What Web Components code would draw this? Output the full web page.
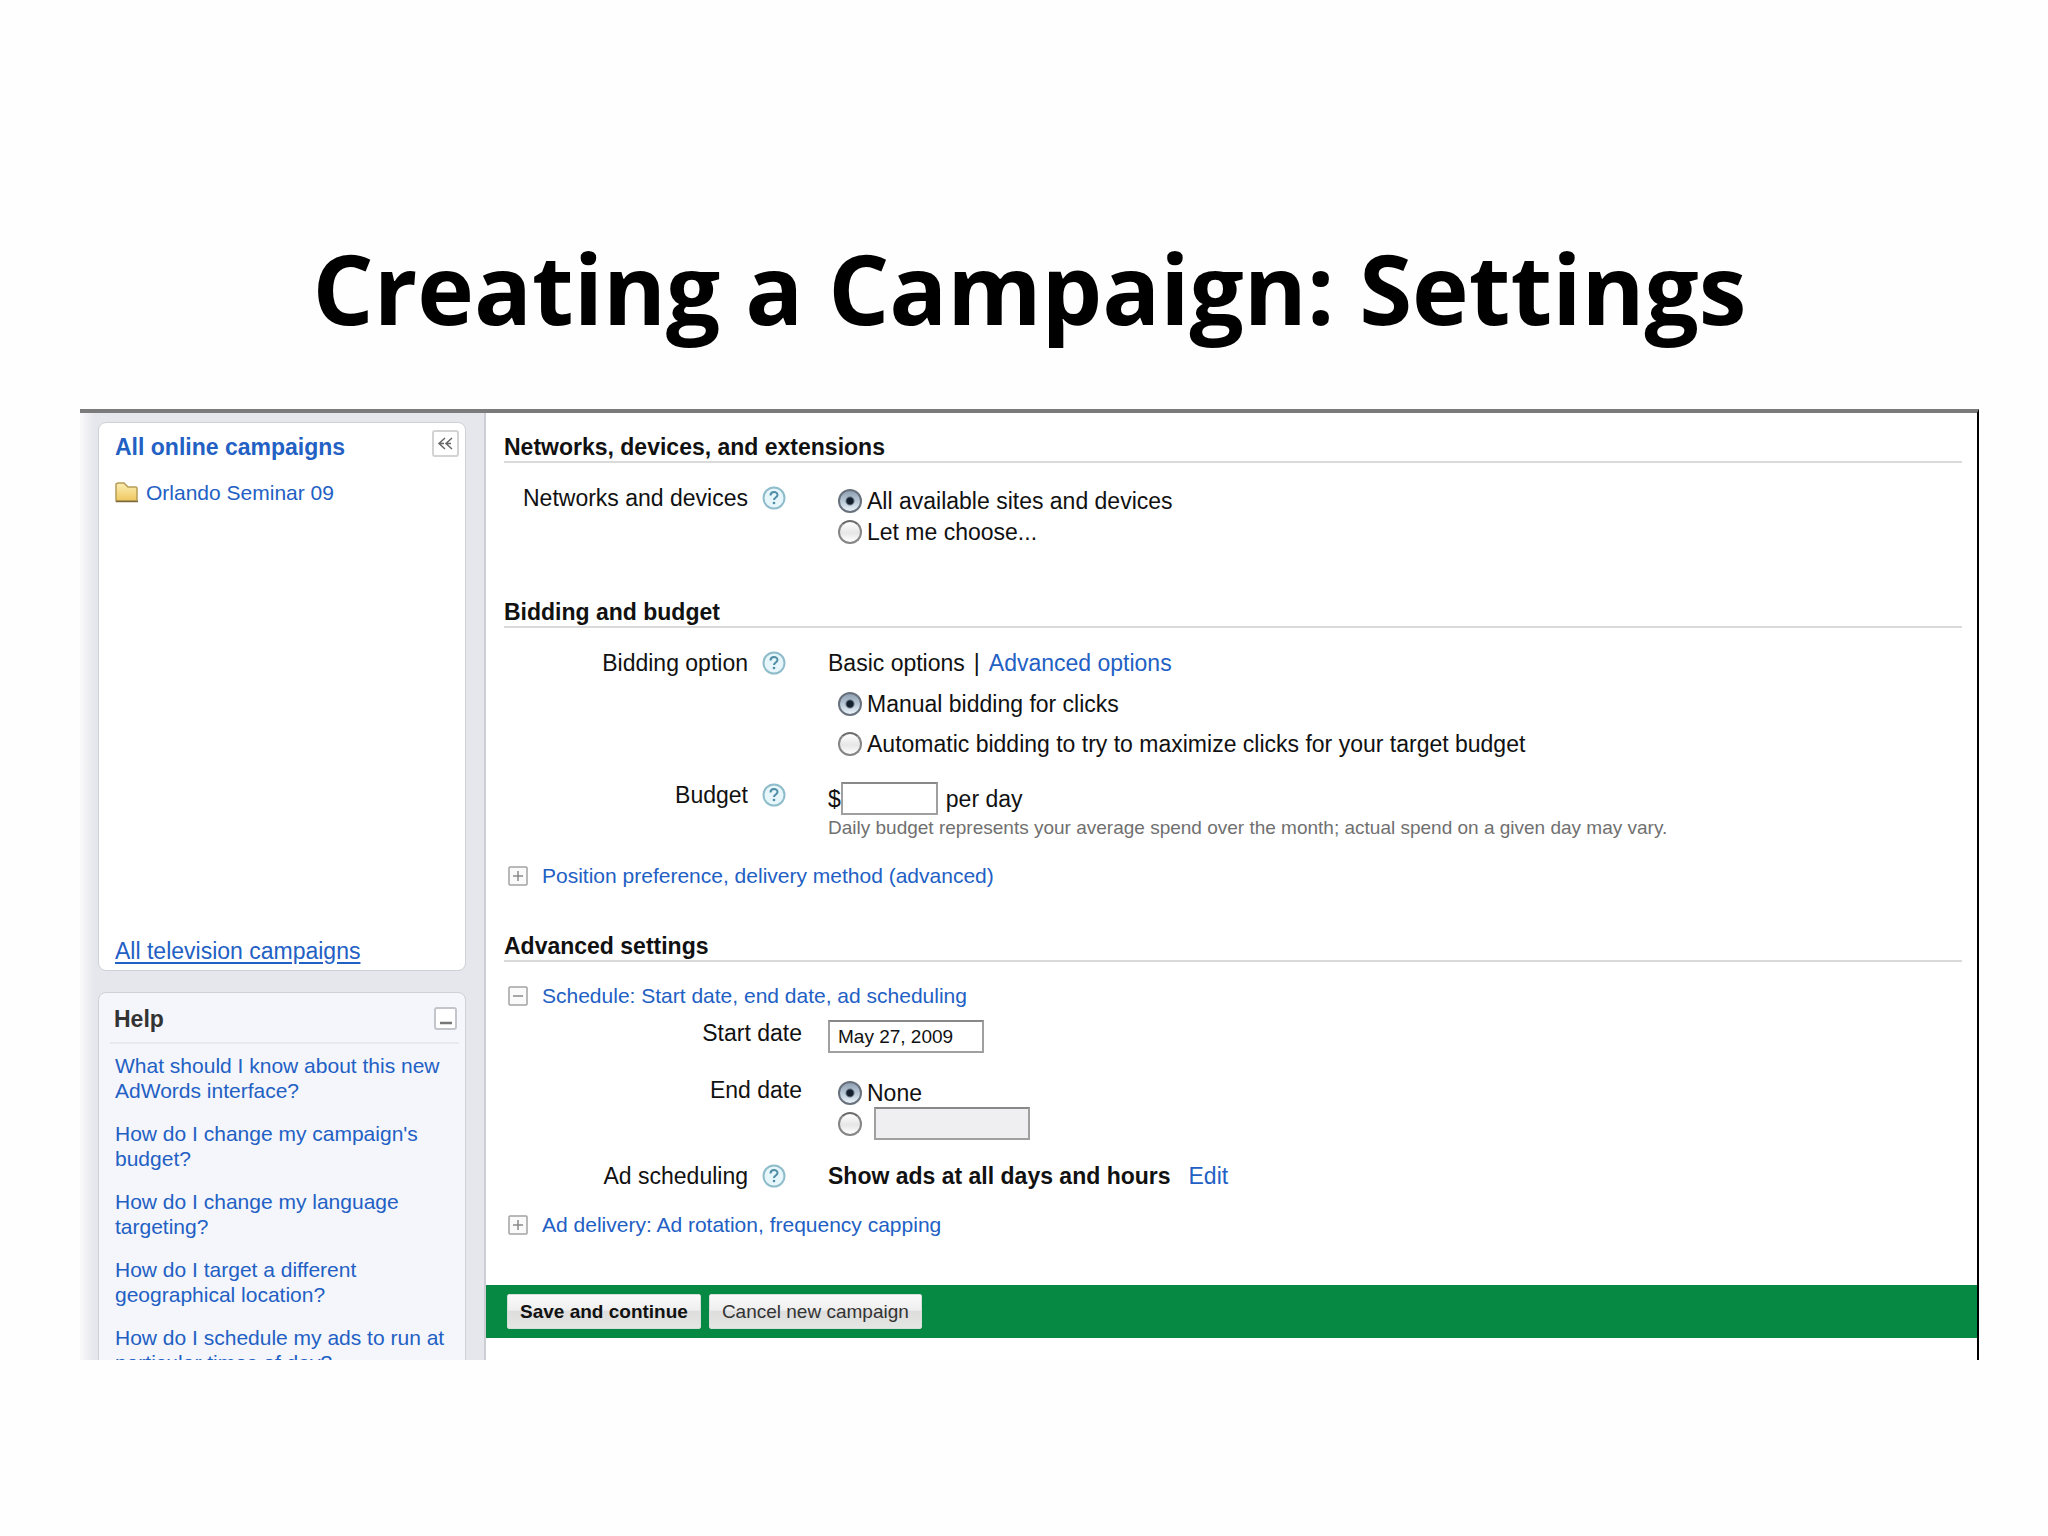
<!DOCTYPE html>
<html lang="en">
<head>
<meta charset="utf-8">
<title>Creating a Campaign: Settings</title>
<style>
    body {
        margin: 0;
        background: #fefefe;
        color: #111;
        font-family: "Liberation Sans", Arial, sans-serif;
        font-size: 23px;
        line-height: 26px;
        --link: #2260c4;
    }
</style>
</head>
<body>
<slide-page heading="Creating a Campaign: Settings">
    <side-bar slot="side"></side-bar>
    <campaign-form></campaign-form>
</slide-page>

<script>
class BaseElement extends HTMLElement {
    constructor() {
        super();
        this.attachShadow({ mode: "open" });
    }

    connectedCallback() {
        this.shadowRoot.innerHTML = this.render();
    }
}

class SlidePage extends BaseElement {
    render() {
        return `
            <style>
                :host {
                    display: block;
                    padding: 230px 69px 0 80px;
                }

                h1 {
                    margin: 0 0 63px;
                    text-align: center;
                    font: 700 96px/116px "Open Sans", "Noto Sans", sans-serif;
                    color: #000;
                }

                .frame {
                    display: grid;
                    grid-template-columns: 406px 1fr;
                    border-top: 4px solid #7b7b7b;
                    border-right: 2px solid #000;
                }
            </style>
            <h1>${this.getAttribute("heading")}</h1>
            <div class="frame">
                <slot name="side"></slot>
                <slot></slot>
            </div>
        `;
    }
}

class SideBar extends BaseElement {
    render() {
        return `
            <style>
                /* size containment lets the form set the height, the help list is cut off */
                :host {
                    display: flex;
                    flex-direction: column;
                    gap: 21px;
                    contain: size;
                    overflow: hidden;
                    box-sizing: border-box;
                    padding: 9px 18px 0;
                    border-right: 2px solid #cdced4;
                    background: linear-gradient(90deg, #fafafc, #e6e7ec 14px);
                }

                a {
                    color: var(--link);
                    text-decoration: none;
                }

                .campaigns {
                    min-height: 549px;
                }

                .folder {
                    display: flex;
                    align-items: center;
                    gap: 7px;
                    margin: 20px 0 auto;
                    font-size: 21px;
                }

                .tv {
                    margin-bottom: 6px;
                    text-decoration: underline;
                    text-underline-offset: 3px;
                    align-self: flex-start;
                }

                ul {
                    list-style: none;
                    margin: 9px 0 0;
                    padding: 0;
                    font-size: 21px;
                    line-height: 25px;
                }

                li {
                    margin-bottom: 18px;
                }
            </style>
            <side-panel class="campaigns" symbol="collapse">
                <a slot="title" href="#">All online campaigns</a>
                <div class="folder">
                    <svg width="24" height="22" viewBox="0 0 24 22" aria-hidden="true">
                        <defs>
                            <linearGradient id="f" x1="0" y1="0" x2="0" y2="1">
                                <stop offset="0" stop-color="#fbeeb4"/>
                                <stop offset="1" stop-color="#efc75e"/>
                            </linearGradient>
                        </defs>
                        <path d="M1 19V2l2-1h6l4 4h8l1 1v13z" fill="url(#f)" stroke="#b79c58" stroke-width="1.5"/>
                        <path d="M1 19.500h22" stroke="#7d6a3a" stroke-width="1.5"/>
                    </svg>
                    <a href="#">Orlando Seminar 09</a>
                </div>
                <a class="tv" href="#">All television campaigns</a>
            </side-panel>
            <side-panel tinted symbol="minimize">
                <span slot="title">Help</span>
                <ul>
                    <li><a href="#">What should I know about this new AdWords interface?</a></li>
                    <li><a href="#">How do I change my campaign's budget?</a></li>
                    <li><a href="#">How do I change my language targeting?</a></li>
                    <li><a href="#">How do I target a different geographical location?</a></li>
                    <li><a href="#">How do I schedule my ads to run at particular times of day?</a></li>
                </ul>
            </side-panel>
        `;
    }
}

class SidePanel extends BaseElement {
    render() {
        const collapse = this.getAttribute("symbol") === "collapse";
        const icon = collapse
            ? `<svg width="17" height="13" viewBox="0 0 17 13"><path d="M8 1 2 6.500l6 5.500M15 1 9 6.500l6 5.500M3 6.500h4M10 6.500h4" fill="none" stroke="#666" stroke-width="1.500"/></svg>`
            : `<svg width="14" height="14" viewBox="0 0 14 14"><path d="M1 11h12" stroke="#777" stroke-width="2.500"/></svg>`;

        return `
            <style>
                :host {
                    display: flex;
                    flex-direction: column;
                    flex-shrink: 0;
                    box-sizing: border-box;
                    padding: 7px 6px 0 16px;
                    border: 1px solid #cfd0d8;
                    border-radius: 8px;
                    background: #fff;
                }

                :host([tinted]) {
                    padding-top: 11px;
                    background: #f5f6fb;
                }

                header {
                    display: flex;
                    justify-content: space-between;
                    align-items: flex-start;
                    font-weight: bold;
                    color: #333;
                }

                :host([tinted]) header {
                    margin-left: -5px;
                    padding: 0 2px 10px 4px;
                    border-bottom: 2px solid #e8e9ed;
                }

                .title {
                    padding-top: 4px;
                }

                :host([tinted]) .title {
                    padding-top: 2px;
                }

                button {
                    display: grid;
                    place-items: center;
                    width: 27px;
                    height: 27px;
                    padding: 0;
                    border: 2px solid #d3d3d3;
                    border-radius: 3px;
                    background: #fff;
                }

                :host([tinted]) button {
                    width: 23px;
                    height: 23px;
                    margin-top: 3px;
                    border-color: #c4c4cb;
                }
            </style>
            <header>
                <div class="title"><slot name="title"></slot></div>
                <button type="button" aria-label="${collapse ? "Collapse" : "Minimize"}">${icon}</button>
            </header>
            <slot></slot>
        `;
    }
}

class CampaignForm extends BaseElement {
    render() {
        return `
            <style>
                :host {
                    display: block;
                    padding-top: 20px;
                    background: #fff;
                }

                a {
                    color: var(--link);
                    text-decoration: none;
                }

                .networks {
                    padding-bottom: 51px;
                }

                .bidding {
                    padding-bottom: 44px;
                }

                .option {
                    display: flex;
                    align-items: center;
                    gap: 5px;
                    height: 31px;
                    margin-left: 10px;
                }

                .option.roomy {
                    height: 40px;
                }

                .basic {
                    display: flex;
                    gap: 9px;
                    margin-bottom: 8px;
                }

                .amount {
                    display: flex;
                    align-items: center;
                }

                .amount label {
                    padding-left: 8px;
                }

                .hint {
                    margin-top: 1px;
                    font-size: 19px;
                    line-height: 24px;
                    color: #707070;
                }

                .date {
                    padding-bottom: 6px;
                }

                .edit {
                    margin-left: 18px;
                }

                input {
                    box-sizing: border-box;
                    margin: 0;
                }

                input[type="text"] {
                    width: 156px;
                    height: 33px;
                    padding: 0 8px;
                    border: 2px solid #a0a0a0;
                    border-top-color: #888;
                    background: #fff;
                    font: 19px "Liberation Sans", Arial, sans-serif;
                    color: #111;
                }

                input.short {
                    width: 97px;
                }

                input[type="text"]:disabled {
                    background: #efeef1;
                }

                input[type="radio"] {
                    appearance: none;
                    flex: none;
                    width: 24px;
                    height: 24px;
                    border: 2px solid #858585;
                    border-top-color: #6c6c6c;
                    border-radius: 50%;
                    background: linear-gradient(#fff, #e6e6e6 55%, #fff);
                }

                input[type="radio"]:checked {
                    border-color: #68717c;
                    background: radial-gradient(circle, #15202e 3px, #0000 5px), linear-gradient(#8fa0b3, #b9c8d6 50%, #eaf3fa);
                }

                .end-date {
                    margin-left: 7px;
                }
            </style>
            <form-section class="networks" heading="Networks, devices, and extensions">
                <form-row help>
                    <span slot="label">Networks and devices</span>
                    <label class="option"><input type="radio" name="network" checked>All available sites and devices</label>
                    <label class="option"><input type="radio" name="network">Let me choose...</label>
                </form-row>
            </form-section>
            <form-section class="bidding" heading="Bidding and budget">
                <form-row help>
                    <span slot="label">Bidding option</span>
                    <div class="basic"><span>Basic options</span><span>|</span><a href="#">Advanced options</a></div>
                    <label class="option roomy"><input type="radio" name="bidding" checked>Manual bidding for clicks</label>
                    <label class="option roomy"><input type="radio" name="bidding">Automatic bidding to try to maximize clicks for your target budget</label>
                </form-row>
                <form-row help>
                    <label slot="label" for="budget">Budget</label>
                    <div class="amount">$<input class="short" id="budget" type="text"><label for="budget">per day</label></div>
                    <div class="hint">Daily budget represents your average spend over the month; actual spend on a given day may vary.</div>
                </form-row>
                <expand-link>Position preference, delivery method (advanced)</expand-link>
            </form-section>
            <form-section heading="Advanced settings">
                <expand-link open>Schedule: Start date, end date, ad scheduling</expand-link>
                <form-row class="date">
                    <label slot="label" for="start">Start date</label>
                    <input id="start" type="text" value="May 27, 2009">
                </form-row>
                <form-row class="date">
                    <span slot="label">End date</span>
                    <label class="option"><input type="radio" name="end" checked>None</label>
                    <div class="option">
                        <input type="radio" name="end" aria-label="End on a date">
                        <input class="end-date" type="text" aria-label="End date" disabled>
                    </div>
                </form-row>
                <form-row help>
                    <span slot="label">Ad scheduling</span>
                    <b>Show ads at all days and hours</b><a class="edit" href="#">Edit</a>
                </form-row>
                <expand-link>Ad delivery: Ad rotation, frequency capping</expand-link>
            </form-section>
            <action-bar></action-bar>
        `;
    }
}

class FormSection extends BaseElement {
    render() {
        return `
            <style>
                :host {
                    display: block;
                    padding: 0 15px 48px 18px;
                }

                h2 {
                    margin: 0;
                    border-bottom: 2px solid #dadadd;
                    font-size: 23px;
                    line-height: 28px;
                }

                .content {
                    display: flex;
                    flex-direction: column;
                    gap: 18px;
                    padding-top: 22px;
                }
            </style>
            <h2>${this.getAttribute("heading")}</h2>
            <div class="content"><slot></slot></div>
        `;
    }
}

class FormRow extends BaseElement {
    render() {
        const help = this.hasAttribute("help") ? "<help-icon></help-icon>" : "";

        return `
            <style>
                :host {
                    display: grid;
                    grid-template-columns: 298px 1fr;
                    column-gap: 26px;
                }

                .label {
                    display: flex;
                    justify-content: flex-end;
                    align-items: flex-start;
                    gap: 14px;
                }
            </style>
            <div class="label"><slot name="label"></slot>${help}</div>
            <div><slot></slot></div>
        `;
    }
}

class HelpIcon extends BaseElement {
    render() {
        return `
            <style>
                :host {
                    display: block;
                    width: 24px;
                    height: 24px;
                    margin: 1px 16px 0 0;
                }

                button {
                    display: block;
                    padding: 0;
                    border: 0;
                    background: none;
                }

                svg {
                    display: block;
                }
            </style>
            <button type="button" aria-label="Help">
                <svg width="24" height="24" viewBox="0 0 24 24">
                    <circle cx="12" cy="12" r="10.500" fill="#e6f6fa" stroke="#8fbccb" stroke-width="2"/>
                    <path d="M8.500 9.500c0-4.500 7-4.500 7-.5 0 2.500-3.500 2.500-3.500 5" fill="none" stroke="#4f8ea6" stroke-width="2"/>
                    <circle cx="12" cy="17" r="1.300" fill="#4f8ea6"/>
                </svg>
            </button>
        `;
    }
}

class ExpandLink extends BaseElement {
    render() {
        const sign = this.hasAttribute("open") ? "M5 10h10" : "M5 10h10M10 5v10";

        return `
            <style>
                :host {
                    display: flex;
                    margin-top: 6px;
                    font-size: 21px;
                    line-height: 24px;
                }

                :host([open]) {
                    margin: 0 0 -6px;
                }

                a {
                    display: flex;
                    align-items: center;
                    gap: 14px;
                    padding-left: 4px;
                    color: var(--link);
                    text-decoration: none;
                }
            </style>
            <a href="#">
                <svg width="20" height="20" viewBox="0 0 20 20" aria-hidden="true">
                    <rect x="1" y="1" width="18" height="18" rx="1" fill="#fafafa" stroke="#a3a3a3" stroke-width="1.500"/>
                    <path d="${sign}" stroke="#8a8a8a" stroke-width="1.500"/>
                </svg>
                <slot></slot>
            </a>
        `;
    }
}

class ActionBar extends BaseElement {
    render() {
        return `
            <style>
                :host {
                    display: flex;
                    gap: 8px;
                    margin-bottom: 22px;
                    padding: 9px 21px;
                    background: #058943;
                }

                button {
                    height: 35px;
                    padding: 0 12px;
                    border: 1px solid #d5ded8;
                    border-radius: 2px;
                    background: linear-gradient(#fafafa, #efefef 45%, #dedede 50%, #e3e6e2);
                    font: 19px "Liberation Sans", Arial, sans-serif;
                    color: #333;
                }

                .primary {
                    font-weight: bold;
                    color: #111;
                }
            </style>
            <button class="primary" type="submit">Save and continue</button>
            <button type="button">Cancel new campaign</button>
        `;
    }
}

customElements.define("slide-page", SlidePage);
customElements.define("side-bar", SideBar);
customElements.define("side-panel", SidePanel);
customElements.define("campaign-form", CampaignForm);
customElements.define("form-section", FormSection);
customElements.define("form-row", FormRow);
customElements.define("help-icon", HelpIcon);
customElements.define("expand-link", ExpandLink);
customElements.define("action-bar", ActionBar);
</script>
</body>
</html>
